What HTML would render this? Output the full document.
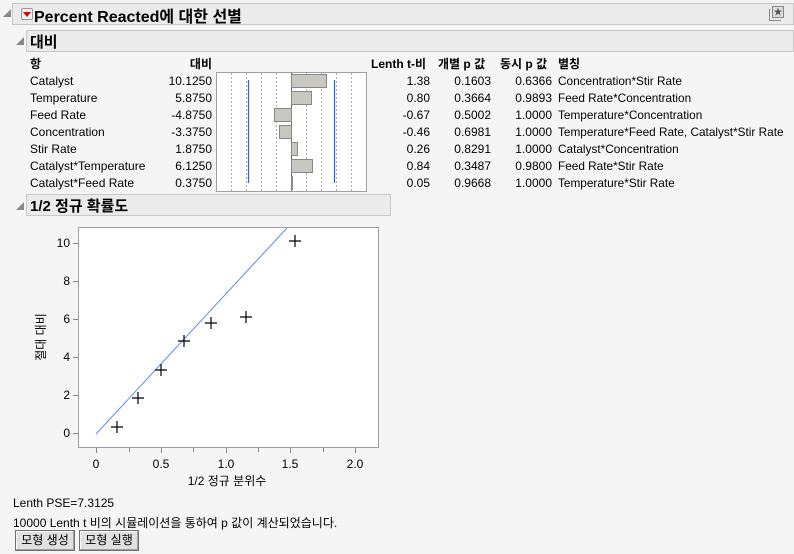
<!DOCTYPE html>
<html><head><meta charset="utf-8"><style>
body{margin:0;width:794px;height:554px;background:#f5f5f5;font-family:"Liberation Sans","Noto Sans CJK KR",sans-serif;font-size:12px;color:#000;position:relative;overflow:hidden}
.a{position:absolute;white-space:nowrap}
.hd{position:absolute;background:#ebebeb;border:1px solid #c8c8c8;box-sizing:border-box}
.tri{position:absolute;width:0;height:0;border-left:8px solid transparent;border-bottom:8px solid #888}
.r{text-align:right}
.btn{position:absolute;top:530px;height:21px;background:#e0e0e0;border:1px solid #707070;box-shadow:inset -1px -1px 0 #a0a0a0,inset 1px 1px 0 #fff;box-sizing:border-box;text-align:center;line-height:19px;font-size:12px}
</style></head><body>
<div class="tri" style="left:3px;top:9px"></div>
<div class="hd" style="left:12px;top:3px;width:782px;height:22px"></div>
<div class="a" style="left:21px;top:8px;width:10px;height:10px;border:1px solid #999;background:#f0f0f0;border-radius:2px"></div>
<div class="a" style="left:23px;top:12px;width:0;height:0;border-left:4px solid transparent;border-right:4px solid transparent;border-top:5px solid #d00"></div>
<div class="a" style="left:34px;top:3px;font-size:16px;font-weight:bold">Percent Reacted에 대한 선별</div>
<div class="a" style="left:772px;top:6px;width:10px;height:10px;border:1px solid #888;background:#ddd;font-size:9px;line-height:10px;text-align:center;color:#555">★</div>
<div class="a" style="left:769px;top:9px;width:11px;height:11px;border-left:1px solid #888;border-bottom:1px solid #888"></div>

<div class="tri" style="left:16px;top:37px"></div>
<div class="hd" style="left:26px;top:30px;width:768px;height:22px"></div>
<div class="a" style="left:30px;top:31px;font-size:15px;font-weight:bold">대비</div>

<div class="a" style="left:30px;top:55px;font-weight:bold">항</div>
<div class="a r" style="left:150px;top:55px;width:62px;font-weight:bold">대비</div>
<div class="a" style="left:371px;top:55px;font-weight:bold">Lenth t-비</div>
<div class="a" style="left:438px;top:55px;font-weight:bold">개별 p 값</div>
<div class="a" style="left:500px;top:55px;font-weight:bold">동시 p 값</div>
<div class="a" style="left:558px;top:55px;font-weight:bold">별칭</div>

<div class="a" style="left:30px;top:73px;line-height:17px">Catalyst<br>Temperature<br>Feed Rate<br>Concentration<br>Stir Rate<br>Catalyst*Temperature<br>Catalyst*Feed Rate</div>
<div class="a r" style="left:150px;top:73px;width:62px;line-height:17px">10.1250<br>5.8750<br>-4.8750<br>-3.3750<br>1.8750<br>6.1250<br>0.3750</div>
<div class="a r" style="left:380px;top:73px;width:50px;line-height:17px">1.38<br>0.80<br>-0.67<br>-0.46<br>0.26<br>0.84<br>0.05</div>
<div class="a r" style="left:440px;top:73px;width:51px;line-height:17px">0.1603<br>0.3664<br>0.5002<br>0.6981<br>0.8291<br>0.3487<br>0.9668</div>
<div class="a r" style="left:500px;top:73px;width:52px;line-height:17px">0.6366<br>0.9893<br>1.0000<br>1.0000<br>1.0000<br>0.9800<br>1.0000</div>
<div class="a" style="left:558px;top:73px;line-height:17px;font-size:11.8px">Concentration*Stir Rate<br>Feed Rate*Concentration<br>Temperature*Concentration<br>Temperature*Feed Rate, Catalyst*Stir Rate<br>Catalyst*Concentration<br>Feed Rate*Stir Rate<br>Temperature*Stir Rate</div>

<svg class="a" style="left:216px;top:72px" width="151" height="120">
<rect x="0.5" y="0.5" width="150" height="119" fill="#fff" stroke="#a0a0a0"/>
<g stroke="#aaa" stroke-dasharray="2,2"><path d="M15.5 1V119M30.5 1V119M45.5 1V119M60.5 1V119M90.5 1V119M105.5 1V119M120.5 1V119M135.5 1V119"/></g>
<path d="M75.5 1V119" stroke="#666"/>
<path d="M32.5 8V111M118.5 8V111" stroke="#1f5fff" stroke-width="1.2"/>
<g fill="#c8c7c0" stroke="#888">
<rect x="75.5" y="2.5" width="35" height="13"/>
<rect x="75.5" y="19.5" width="20" height="13"/>
<rect x="58.5" y="36.5" width="17" height="13"/>
<rect x="63.5" y="53.5" width="12" height="13"/>
<rect x="75.5" y="70.5" width="6" height="13"/>
<rect x="75.5" y="87.5" width="21" height="13"/>
<rect x="75.5" y="104.5" width="1" height="13"/>
</g></svg>

<div class="tri" style="left:16px;top:202px"></div>
<div class="hd" style="left:26px;top:194px;width:365px;height:22px"></div>
<div class="a" style="left:30px;top:195px;font-size:15px;font-weight:bold">1/2 정규 확률도</div>

<svg class="a" style="left:0;top:220px" width="400" height="270">
<rect x="78.5" y="7.5" width="300" height="220" fill="#fff" stroke="#a0a0a0"/>
<g stroke="#888"><path d="M73 23.5H78M73 61.5H78M73 99.5H78M73 137.5H78M73 175.5H78M73 213.5H78"/>
<path d="M96.5 228V233M129.5 228V232M161.5 228V233M193.5 228V232M226.5 228V233M258.5 228V232M290.5 228V233M323.5 228V232M355.5 228V233"/></g>
<g font-size="12" text-anchor="end" fill="#000" font-family="Liberation Sans, sans-serif">
<text x="70" y="27">10</text><text x="70" y="65">8</text><text x="70" y="103">6</text><text x="70" y="141">4</text><text x="70" y="179">2</text><text x="70" y="217">0</text></g>
<g font-size="12" text-anchor="middle" font-family="Liberation Sans, sans-serif">
<text x="96" y="248">0</text><text x="161" y="248">0.5</text><text x="226" y="248">1.0</text><text x="290" y="248">1.5</text><text x="355" y="248">2.0</text>
<text x="227" y="265" font-family="Liberation Sans, Noto Sans CJK KR, sans-serif">1/2 정규 분위수</text>
<text transform="translate(45,117) rotate(-90)" text-anchor="middle" font-family="Liberation Sans, Noto Sans CJK KR, sans-serif">절대 대비</text></g>
<path d="M96 214L287 8" stroke="#5b8cf0" stroke-width="1"/>
<g stroke="#000" stroke-width="1.2">
<path d="M111 207H123M117 201V213"/><path d="M132 178H144M138 172V184"/><path d="M155 150H167M161 144V156"/><path d="M178 121H190M184 115V127"/><path d="M205 103H217M211 97V109"/><path d="M240 97H252M246 91V103"/><path d="M289 21H301M295 15V27"/></g>
</svg>

<div class="a" style="left:13px;top:496px">Lenth PSE=7.3125</div>
<div class="a" style="left:13px;top:514px">10000 Lenth t 비의 시뮬레이션을 통하여 p 값이 계산되었습니다.</div>
<div class="btn" style="left:15px;width:60px">모형 생성</div>
<div class="btn" style="left:79px;width:60px">모형 실행</div>
</body></html>
